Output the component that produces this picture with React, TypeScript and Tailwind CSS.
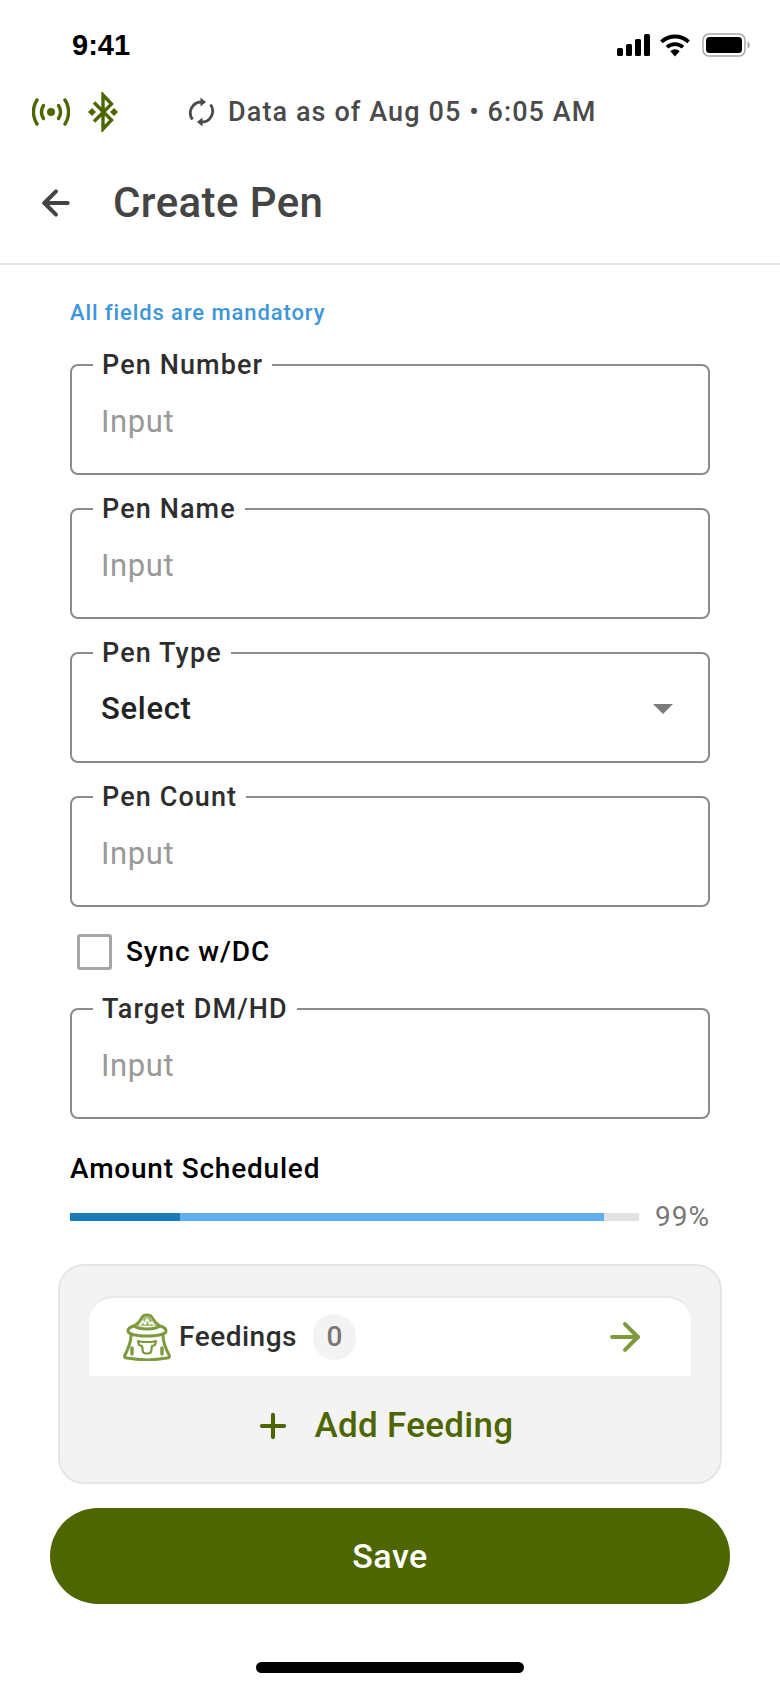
import { ArrowLeft, ArrowRight, Plus } from 'lucide-react';

const font = { fontFamily: 'Roboto, "Liberation Sans", sans-serif' };

function StatusIcons() {
  return (
    <div className="flex items-center gap-[8px]">
      <svg width="34" height="22" viewBox="0 0 34 22">
        <rect x="0" y="14" width="6" height="8" rx="1.5" fill="#000" />
        <rect x="9" y="10" width="6" height="12" rx="1.5" fill="#000" />
        <rect x="18" y="5" width="6" height="17" rx="1.5" fill="#000" />
        <rect x="27" y="0" width="6" height="22" rx="1.5" fill="#000" />
      </svg>
      <svg width="32" height="24" viewBox="0 0 30 23" fill="none">
        <path d="M2 8.500a19 19 0 0 1 26 0" stroke="#000" strokeWidth="3.600" />
        <path d="M7.300 13.600a11.500 11.500 0 0 1 15.400 0" stroke="#000" strokeWidth="3.600" />
        <path d="M10.500 17.400 15 22.500l4.500-5.100a6.500 6.500 0 0 0-9 0Z" fill="#000" />
      </svg>
      <svg width="48" height="24" viewBox="0 0 48 24" className="ml-[3px]">
        <rect x="1" y="1" width="42" height="22" rx="6" fill="none" stroke="#a8a8a8" strokeWidth="1.500" />
        <rect x="4" y="4" width="36" height="16" rx="3.500" fill="#000" />
        <path d="M45.500 8.500c1.400.5 2.200 1.900 2.200 3.500s-.8 3-2.200 3.500Z" fill="#a8a8a8" />
      </svg>
    </div>
  );
}

function SignalIcon() {
  return (
    <svg width="38" height="28" viewBox="0 0 38 28" fill="none" stroke="#4d6600" strokeWidth="3.400" strokeLinecap="round">
      <circle cx="19" cy="14" r="4" fill="#4d6600" stroke="none" />
      <path d="M11.500 7.500a12 12 0 0 0 0 13" />
      <path d="M26.500 7.500a12 12 0 0 1 0 13" />
      <path d="M5 2a22 22 0 0 0 0 24" />
      <path d="M33 2a22 22 0 0 1 0 24" />
    </svg>
  );
}

function BluetoothIcon() {
  return (
    <svg width="30" height="40" viewBox="0 0 30 40" fill="none">
      <path d="M6 10.500 23.500 28 15 37V3l8.500 9L6 29.500" stroke="#4d6600" strokeWidth="3.400" />
      <path d="M4 16 8 20 4 24 0 20Z" fill="#4d6600" />
      <path d="M26 16 30 20 26 24 22 20Z" fill="#4d6600" />
    </svg>
  );
}

function SyncIcon() {
  return (
    <svg width="27" height="30" viewBox="0 0 27 30" fill="none" stroke="#4a4a4a" strokeWidth="2.800">
      <path d="M4.500 22.500A11 11 0 0 1 13.500 5" />
      <path d="M22.500 7.500A11 11 0 0 1 13.500 25" />
      <path d="M12.500.5 18 5l-5.500 4.500Z" fill="#4a4a4a" stroke="none" />
      <path d="M14.500 20.500 9 25l5.500 4.500Z" fill="#4a4a4a" stroke="none" />
    </svg>
  );
}

function SackIcon() {
  return (
    <svg width="50" height="48" viewBox="0 0 50 48" fill="none" stroke="#7c9a3c" strokeWidth="2.600" strokeLinejoin="round" strokeLinecap="round">
      {/* grain mound */}
      <path d="M12 13c3-2 6-5 8-9 2-3 8-3 10 0 2 4 5 7 8 9" fill="#a9bf7c" strokeWidth="2.400" />
      <path d="M18 12l3-4 2 3 2-5 3 5 2-2 2 3" stroke="#ffffff" strokeWidth="1.400" />
      {/* collar */}
      <path d="M12 13c-4 1-6 3-6 5 0 3 8 5 19 5s19-2 19-5c0-2-2-4-6-5-3 2-8 3-13 3s-10-1-13-3Z" fill="#ffffff" strokeWidth="3" />
      {/* body */}
      <path d="M9 23c0 7-3 13-6 19-1 2 0 3 2 3 7 1 13 2 20 2s13-1 20-2c2 0 3-1 2-3-3-6-6-12-6-19" strokeWidth="3" />
      <path d="M10 35v6M40 35v6" strokeWidth="3.400" />
      {/* cow */}
      <path d="M16 28l4 1h10l4-1-1 4-3 1-1 6c-1 2-7 2-8 0l-1-6-3-1Z" strokeWidth="2.200" />
    </svg>
  );
}

function Field({ label, select }: { label: string; select?: boolean }) {
  return (
    <fieldset className="flex h-[124px] flex-col rounded-lg border-2 border-[#8c8c8c] px-[29px]">
      <legend className="ml-[-8px] px-[9px] text-[27px] leading-[28px] font-medium tracking-[1.100px] text-[#2e2e2e]">{label}</legend>
      {select ? (
        <div className="mt-[14px] flex h-[56px] items-center justify-between pr-[6px]">
          <span className="text-[31px] font-medium tracking-[0.700px] text-[#222222]">Select</span>
          <div className="h-0 w-0 border-x-[10px] border-t-[10px] border-x-transparent border-t-[#7a7a7a]" />
        </div>
      ) : (
        <input
          placeholder="Input"
          style={font}
          className="mt-[14px] h-[56px] w-full bg-transparent text-[31px] tracking-[0.600px] outline-none placeholder:text-[#999999]"
        />
      )}
    </fieldset>
  );
}

export default function App() {
  return (
    <div style={font} className="flex h-[1688px] w-[780px] flex-col bg-white">
      {/* iOS status bar */}
      <div className="flex h-[90px] items-center justify-between pr-[30px] pl-[72px]">
        <span style={{ fontFamily: '"Liberation Sans", sans-serif' }} className="text-[29px] leading-none font-bold text-black">
          9:41
        </span>
        <StatusIcons />
      </div>

      {/* connectivity + data age */}
      <div className="flex h-[44px] items-center pl-[32px]">
        <SignalIcon />
        <div className="ml-[18px]"><BluetoothIcon /></div>
        <div className="ml-[70px]"><SyncIcon /></div>
        <span className="ml-[13px] text-[27px] font-medium tracking-[1.100px] text-[#4a4a4a]">Data as of Aug 05 • 6:05 AM</span>
      </div>

      {/* title */}
      <div className="flex h-[131px] items-center border-b-2 border-[#e5e5e5] pt-[8px] pl-[36px]">
        <ArrowLeft size={40} strokeWidth={2.400} color="#444444" />
        <h1 className="ml-[37px] text-[42px] font-medium tracking-[0.400px] text-[#444444]">Create Pen</h1>
      </div>

      <div className="flex flex-col px-[70px]">
        <p className="mt-[36px] text-[22px] leading-[24px] font-medium tracking-[0.900px] text-[#3d96d8]">All fields are mandatory</p>
        <div className="mt-[26px] flex flex-col gap-[20px]">
          <Field label="Pen Number" />
          <Field label="Pen Name" />
          <Field label="Pen Type" select />
          <Field label="Pen Count" />
        </div>

        <div className="mt-[24px] flex items-center pl-[7px]">
          <div className="h-[36px] w-[35px] rounded-[3px] border-[3px] border-[#a6a6a6]" />
          <span className="ml-[14px] text-[28px] font-medium tracking-[0.900px] text-black">Sync w/DC</span>
        </div>

        <div className="mt-[22px]">
          <Field label="Target DM/HD" />
        </div>

        <p className="mt-[33px] text-[28px] leading-[34px] font-medium tracking-[0.800px] text-black">Amount Scheduled</p>
        <div className="mt-[16px] flex items-center">
          <div className="flex h-[8px] w-[569px] bg-[#e2e2e2]">
            <div className="h-full w-[110px] bg-[#1b7ab8]" />
            <div className="h-full w-[424px] bg-[#5eaeee]" />
          </div>
          <span className="ml-auto text-[28px] leading-[30px] tracking-[1px] text-[#777777]">99%</span>
        </div>
      </div>

      {/* feedings card */}
      <div className="mx-[58px] mt-[32px] flex h-[220px] flex-col rounded-[26px] border-2 border-[#e5e5e5] bg-[#f3f3f3] px-[29px] pt-[30px]">
        <div className="flex h-[80px] items-center rounded-t-[24px] border-t-2 border-[#e8e8e8] bg-white pr-[44px] pl-[33px]">
          <SackIcon />
          <span className="ml-[7px] text-[28px] font-medium tracking-[0.500px] text-[#2e2e2e]">Feedings</span>
          <div className="ml-[16px] flex h-[46px] w-[43px] items-center justify-center rounded-full bg-[#f3f3f3] text-[28px] font-medium text-[#777777]">
            0
          </div>
          <ArrowRight size={44} strokeWidth={2.200} color="#7c9a3c" className="ml-auto" />
        </div>
        <div className="flex flex-1 items-center justify-center pr-[12px] pb-[6px] text-[#4d6600]">
          <Plus size={38} strokeWidth={2.600} />
          <span className="ml-[22px] text-[35px] font-medium tracking-[0.300px]">Add Feeding</span>
        </div>
      </div>

      <button className="mx-[50px] mt-[24px] h-[96px] rounded-full bg-[#4d6600] text-[34px] font-medium tracking-[0.500px] text-white">
        Save
      </button>

      <div className="mx-auto mt-[58px] h-[11px] w-[268px] rounded-full bg-black" />
    </div>
  );
}
